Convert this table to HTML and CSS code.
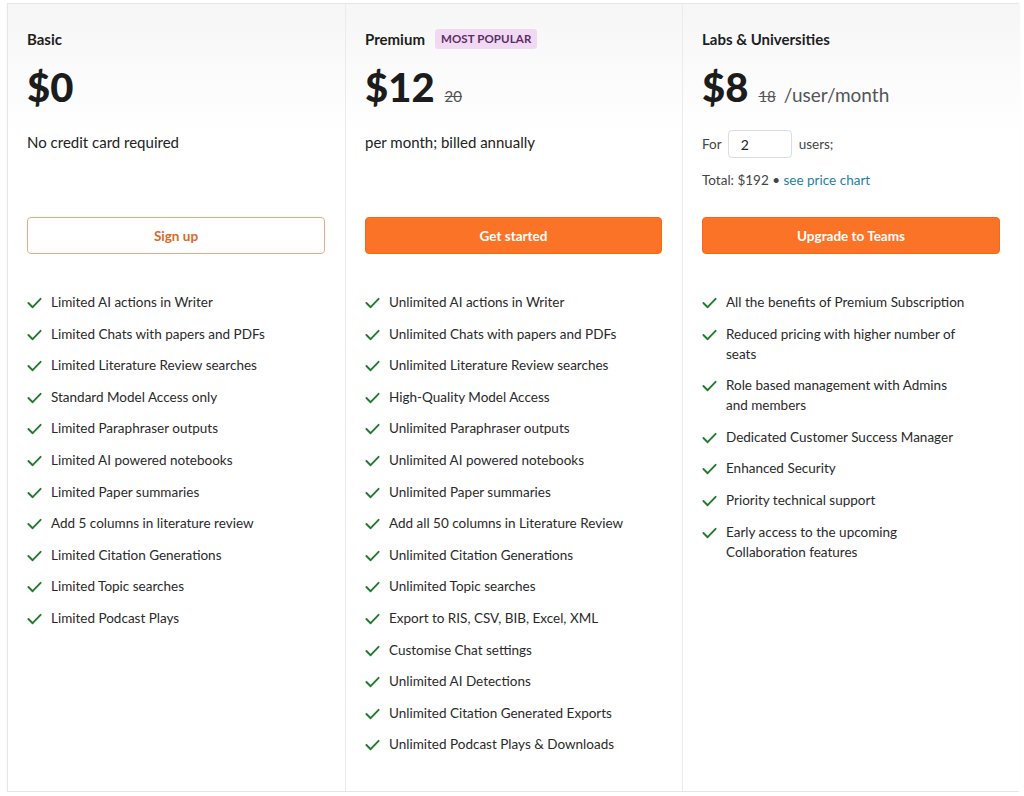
FILE: index.html
```html
<!DOCTYPE html>
<html lang="en">
<head>
<meta charset="utf-8">
<title>Pricing</title>
<link rel="stylesheet" href="styles.css">
</head>
<body>
<div class="plans">
  <section class="plan">
    <div class="plan-head">
      <h2 class="plan-title">Basic</h2>
      <div class="price-row"><span class="price">$0</span></div>
      <div class="desc"><p class="desc-text">No credit card required</p></div>
      <button class="btn btn-outline">Sign up</button>
    </div>
    <ul class="features">
      <li><svg class="check" viewBox="0 0 16 12"><polyline points="1.5,6 6,10.5 14.5,1.5"/></svg><span>Limited AI actions in Writer</span></li>
      <li><svg class="check" viewBox="0 0 16 12"><polyline points="1.5,6 6,10.5 14.5,1.5"/></svg><span>Limited Chats with papers and PDFs</span></li>
      <li><svg class="check" viewBox="0 0 16 12"><polyline points="1.5,6 6,10.5 14.5,1.5"/></svg><span>Limited Literature Review searches</span></li>
      <li><svg class="check" viewBox="0 0 16 12"><polyline points="1.5,6 6,10.5 14.5,1.5"/></svg><span>Standard Model Access only</span></li>
      <li><svg class="check" viewBox="0 0 16 12"><polyline points="1.5,6 6,10.5 14.5,1.5"/></svg><span>Limited Paraphraser outputs</span></li>
      <li><svg class="check" viewBox="0 0 16 12"><polyline points="1.5,6 6,10.5 14.5,1.5"/></svg><span>Limited AI powered notebooks</span></li>
      <li><svg class="check" viewBox="0 0 16 12"><polyline points="1.5,6 6,10.5 14.5,1.5"/></svg><span>Limited Paper summaries</span></li>
      <li><svg class="check" viewBox="0 0 16 12"><polyline points="1.5,6 6,10.5 14.5,1.5"/></svg><span>Add 5 columns in literature review</span></li>
      <li><svg class="check" viewBox="0 0 16 12"><polyline points="1.5,6 6,10.5 14.5,1.5"/></svg><span>Limited Citation Generations</span></li>
      <li><svg class="check" viewBox="0 0 16 12"><polyline points="1.5,6 6,10.5 14.5,1.5"/></svg><span>Limited Topic searches</span></li>
      <li><svg class="check" viewBox="0 0 16 12"><polyline points="1.5,6 6,10.5 14.5,1.5"/></svg><span>Limited Podcast Plays</span></li>
    </ul>
  </section>

  <section class="plan">
    <div class="plan-head">
      <h2 class="plan-title">Premium <span class="badge">MOST POPULAR</span></h2>
      <div class="price-row"><span class="price">$12</span><s class="old">20</s></div>
      <div class="desc"><p class="desc-text">per month; billed annually</p></div>
      <button class="btn btn-solid">Get started</button>
    </div>
    <ul class="features">
      <li><svg class="check" viewBox="0 0 16 12"><polyline points="1.5,6 6,10.5 14.5,1.5"/></svg><span>Unlimited AI actions in Writer</span></li>
      <li><svg class="check" viewBox="0 0 16 12"><polyline points="1.5,6 6,10.5 14.5,1.5"/></svg><span>Unlimited Chats with papers and PDFs</span></li>
      <li><svg class="check" viewBox="0 0 16 12"><polyline points="1.5,6 6,10.5 14.5,1.5"/></svg><span>Unlimited Literature Review searches</span></li>
      <li><svg class="check" viewBox="0 0 16 12"><polyline points="1.5,6 6,10.5 14.5,1.5"/></svg><span>High-Quality Model Access</span></li>
      <li><svg class="check" viewBox="0 0 16 12"><polyline points="1.5,6 6,10.5 14.5,1.5"/></svg><span>Unlimited Paraphraser outputs</span></li>
      <li><svg class="check" viewBox="0 0 16 12"><polyline points="1.5,6 6,10.5 14.5,1.5"/></svg><span>Unlimited AI powered notebooks</span></li>
      <li><svg class="check" viewBox="0 0 16 12"><polyline points="1.5,6 6,10.5 14.5,1.5"/></svg><span>Unlimited Paper summaries</span></li>
      <li><svg class="check" viewBox="0 0 16 12"><polyline points="1.5,6 6,10.5 14.5,1.5"/></svg><span>Add all 50 columns in Literature Review</span></li>
      <li><svg class="check" viewBox="0 0 16 12"><polyline points="1.5,6 6,10.5 14.5,1.5"/></svg><span>Unlimited Citation Generations</span></li>
      <li><svg class="check" viewBox="0 0 16 12"><polyline points="1.5,6 6,10.5 14.5,1.5"/></svg><span>Unlimited Topic searches</span></li>
      <li><svg class="check" viewBox="0 0 16 12"><polyline points="1.5,6 6,10.5 14.5,1.5"/></svg><span>Export to RIS, CSV, BIB, Excel, XML</span></li>
      <li><svg class="check" viewBox="0 0 16 12"><polyline points="1.5,6 6,10.5 14.5,1.5"/></svg><span>Customise Chat settings</span></li>
      <li><svg class="check" viewBox="0 0 16 12"><polyline points="1.5,6 6,10.5 14.5,1.5"/></svg><span>Unlimited AI Detections</span></li>
      <li><svg class="check" viewBox="0 0 16 12"><polyline points="1.5,6 6,10.5 14.5,1.5"/></svg><span>Unlimited Citation Generated Exports</span></li>
      <li><svg class="check" viewBox="0 0 16 12"><polyline points="1.5,6 6,10.5 14.5,1.5"/></svg><span>Unlimited Podcast Plays &amp; Downloads</span></li>
    </ul>
  </section>

  <section class="plan">
    <div class="plan-head">
      <h2 class="plan-title">Labs &amp; Universities</h2>
      <div class="price-row"><span class="price">$8</span><s class="old">18</s><span class="unit">/user/month</span></div>
      <div class="desc desc-team">
        <div class="users-row">For <input class="users-input" type="text" value="2"> users;</div>
        <p class="total">Total: $192 • <a class="link" href="#">see price chart</a></p>
      </div>
      <button class="btn btn-solid">Upgrade to Teams</button>
    </div>
    <ul class="features">
      <li><svg class="check" viewBox="0 0 16 12"><polyline points="1.5,6 6,10.5 14.5,1.5"/></svg><span>All the benefits of Premium Subscription</span></li>
      <li><svg class="check" viewBox="0 0 16 12"><polyline points="1.5,6 6,10.5 14.5,1.5"/></svg><span>Reduced pricing with higher number of seats</span></li>
      <li><svg class="check" viewBox="0 0 16 12"><polyline points="1.5,6 6,10.5 14.5,1.5"/></svg><span>Role based management with Admins and members</span></li>
      <li><svg class="check" viewBox="0 0 16 12"><polyline points="1.5,6 6,10.5 14.5,1.5"/></svg><span>Dedicated Customer Success Manager</span></li>
      <li><svg class="check" viewBox="0 0 16 12"><polyline points="1.5,6 6,10.5 14.5,1.5"/></svg><span>Enhanced Security</span></li>
      <li><svg class="check" viewBox="0 0 16 12"><polyline points="1.5,6 6,10.5 14.5,1.5"/></svg><span>Priority technical support</span></li>
      <li><svg class="check" viewBox="0 0 16 12"><polyline points="1.5,6 6,10.5 14.5,1.5"/></svg><span>Early access to the upcoming Collaboration features</span></li>
    </ul>
  </section>
</div>
</body>
</html>
```

FILE: styles.css
```css
* { box-sizing: border-box; }

html, body {
  margin: 0;
  padding: 0;
  background: #ffffff;
}

body {
  font-family: Lato, "Open Sans", Arial, sans-serif;
  color: #222222;
}

.plans {
  display: grid;
  grid-template-columns: 337px 337px 338px;
  width: 1012px;
  height: 789px;
  margin: 3px 0 0 7px;
  border: 1px solid #e6e6e6;
  box-shadow: 0 1px 3px rgba(0, 0, 0, 0.05);
}

.plan {
  padding: 24px 20px 0 19px;
  background: linear-gradient(to bottom, #f6f6f6 0px, #ffffff 130px);
}

.plan + .plan {
  border-left: 1px solid #ebebeb;
}

.plan-title {
  margin: 0;
  height: 22px;
  display: flex;
  align-items: center;
  gap: 10px;
  font-size: 15px;
  font-weight: 700;
  color: #1e1e1e;
  line-height: 22px;
}

.badge {
  display: inline-block;
  background: #f2d9f3;
  color: #5a2e63;
  font-size: 11.5px;
  font-weight: 700;
  padding: 0 6px;
  height: 20px;
  line-height: 20px;
  border-radius: 3px;
  letter-spacing: 0.1px;
}

.price-row {
  margin-top: 13px;
  height: 48px;
  display: flex;
  align-items: baseline;
  gap: 8px;
}

.price {
  font-size: 40px;
  font-weight: 900;
  line-height: 48px;
  color: #1c1c1c;
  margin-right: 2px;
}

.old {
  font-size: 15px;
  color: #555555;
  text-decoration: line-through;
}

.unit {
  font-size: 19px;
  color: #555555;
  margin-left: 0;
}

.desc {
  height: 106px;
  padding-top: 20px;
}

.desc-text {
  margin: 0;
  font-size: 15px;
  line-height: 22px;
  color: #222222;
}

.desc-team {
  padding-top: 19px;
}

.users-row {
  display: flex;
  align-items: center;
  height: 28px;
  font-size: 13.5px;
  color: #444444;
}

.users-input {
  width: 64px;
  height: 28px;
  margin: 0 7px 0 6px;
  padding: 0 12px;
  border: 1px solid #dddddd;
  border-radius: 4px;
  font-family: inherit;
  font-size: 14px;
  color: #222222;
  background: #ffffff;
}

.total {
  margin: 12px 0 0 0;
  font-size: 13.5px;
  line-height: 20px;
  color: #444444;
}

.link {
  color: #1d7fa3;
  text-decoration: none;
}

.btn {
  display: block;
  width: 100%;
  height: 37px;
  border-radius: 4px;
  font-family: inherit;
  font-size: 13.5px;
  font-weight: 700;
  cursor: pointer;
}

.btn-outline {
  background: #ffffff;
  border: 1px solid #eba987;
  color: #d96a26;
}

.btn-solid {
  background: #fb7327;
  border: 1px solid #f06a1e;
  color: #ffffff;
}

.features {
  list-style: none;
  margin: 38px 0 0 0;
  padding: 0 30px 0 0;
  display: flex;
  flex-direction: column;
  gap: 11.6px;
}

.features li {
  display: flex;
  align-items: flex-start;
  gap: 9px;
  font-size: 13.5px;
  line-height: 20px;
  color: #2a2a2a;
}

.check {
  flex: 0 0 15px;
  width: 15px;
  height: 12px;
  margin-top: 5px;
  fill: none;
  stroke: #237a2d;
  stroke-width: 2;
  stroke-linecap: round;
  stroke-linejoin: round;
}
```
